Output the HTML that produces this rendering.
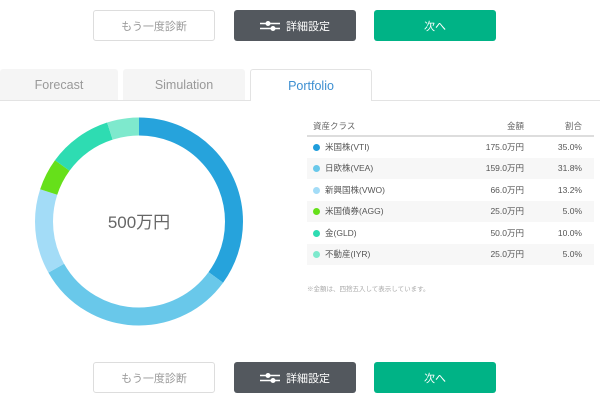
<!DOCTYPE html>
<html><head><meta charset="utf-8"><style>
*{margin:0;padding:0;box-sizing:border-box}
body{width:600px;height:401px;background:#fff;font-family:"Liberation Sans","Noto Sans CJK JP",sans-serif;position:relative;overflow:hidden}
.btn{position:absolute;width:122px;height:31px;border-radius:3px;display:flex;align-items:center;justify-content:center;font-size:11px}
.b1{border:1px solid #ddd;color:#999;background:#fff}
.b2{background:#53585e;color:#fff}
.b3{background:#00b386;color:#fff}
.tab{position:absolute;top:69px;height:32px;width:122px;background:#f5f5f5;color:#999;font-size:12.5px;display:flex;align-items:center;justify-content:center;border-radius:3px 3px 0 0}
.tab.act{background:#fff;border:1px solid #e3e3e3;border-bottom:none;color:#3d8fd1;height:32px;z-index:2}
.line{position:absolute;top:100px;left:0;width:600px;height:1px;background:#e3e3e3}
table{position:absolute;left:307px;top:116px;width:287px;border-collapse:collapse;font-size:8.5px;color:#555}
th{font-weight:normal;height:20px;text-align:right;border-bottom:2px solid #ddd;color:#666}
td{height:21.5px;text-align:right}
th:first-child,td:first-child{text-align:left;padding-left:6px}
th:nth-child(3),td:nth-child(3){padding-right:12px;width:70px}
tr:nth-child(odd) td{background:#f7f7f7}
.d{display:inline-block;width:7px;height:7px;border-radius:50%;margin-right:5px;vertical-align:-1px}
.note{position:absolute;left:307px;top:283px;font-size:6.5px;color:#aaa}
</style></head><body>
<div class="btn b1" style="left:93px;top:10px">もう一度診断</div>
<div class="btn b2" style="left:234px;top:10px"><svg width="20" height="12" style="margin-right:6px"><g stroke="#fff" stroke-width="1.5"><line x1="0" y1="3.5" x2="20" y2="3.5"/><line x1="0" y1="8.5" x2="20" y2="8.5"/></g><circle cx="8" cy="3.5" r="2.5" fill="#fff"/><circle cx="13" cy="8.5" r="2.5" fill="#fff"/></svg>詳細設定</div>
<div class="btn b3" style="left:374px;top:10px">次へ</div>
<div class="tab" style="left:0;width:118px">Forecast</div>
<div class="tab" style="left:123px">Simulation</div>
<div class="tab act" style="left:250px">Portfolio</div>
<div class="line"></div>
<svg style="position:absolute;left:0;top:0" width="300" height="350">
<g transform="rotate(-90 139 221.5)" fill="none" stroke-width="18">
<circle cx="139" cy="221.5" r="95" stroke="#26a3dc" stroke-dasharray="208.92 1000" stroke-dashoffset="0"/>
<circle cx="139" cy="221.5" r="95" stroke="#69c8ea" stroke-dasharray="189.81 1000" stroke-dashoffset="-208.92"/>
<circle cx="139" cy="221.5" r="95" stroke="#a3dcf7" stroke-dasharray="78.79 1000" stroke-dashoffset="-398.73"/>
<circle cx="139" cy="221.5" r="95" stroke="#66e01a" stroke-dasharray="29.85 1000" stroke-dashoffset="-477.52"/>
<circle cx="139" cy="221.5" r="95" stroke="#2edcb2" stroke-dasharray="59.69 1000" stroke-dashoffset="-507.37"/>
<circle cx="139" cy="221.5" r="95" stroke="#7ee9cd" stroke-dasharray="29.85 1000" stroke-dashoffset="-567.06"/>
</g>
<text x="139" y="228" text-anchor="middle" font-size="17" fill="#666" font-family="Liberation Sans,Noto Sans CJK JP,sans-serif">500万円</text>
</svg>
<table>
<tr><th>資産クラス</th><th>金額</th><th>割合</th></tr>
<tr><td><span class="d" style="background:#1f9ddb"></span>米国株(VTI)</td><td>175.0万円</td><td>35.0%</td></tr>
<tr><td><span class="d" style="background:#69c8ea"></span>日欧株(VEA)</td><td>159.0万円</td><td>31.8%</td></tr>
<tr><td><span class="d" style="background:#a3dcf7"></span>新興国株(VWO)</td><td>66.0万円</td><td>13.2%</td></tr>
<tr><td><span class="d" style="background:#66e01a"></span>米国債券(AGG)</td><td>25.0万円</td><td>5.0%</td></tr>
<tr><td><span class="d" style="background:#2edcb2"></span>金(GLD)</td><td>50.0万円</td><td>10.0%</td></tr>
<tr><td><span class="d" style="background:#7ee9cd"></span>不動産(IYR)</td><td>25.0万円</td><td>5.0%</td></tr>
</table>
<div class="note">※金額は、四捨五入して表示しています。</div>
<div class="btn b1" style="left:93px;top:362px">もう一度診断</div>
<div class="btn b2" style="left:234px;top:362px"><svg width="20" height="12" style="margin-right:6px"><g stroke="#fff" stroke-width="1.5"><line x1="0" y1="3.5" x2="20" y2="3.5"/><line x1="0" y1="8.5" x2="20" y2="8.5"/></g><circle cx="8" cy="3.5" r="2.5" fill="#fff"/><circle cx="13" cy="8.5" r="2.5" fill="#fff"/></svg>詳細設定</div>
<div class="btn b3" style="left:374px;top:362px">次へ</div>
</body></html>
